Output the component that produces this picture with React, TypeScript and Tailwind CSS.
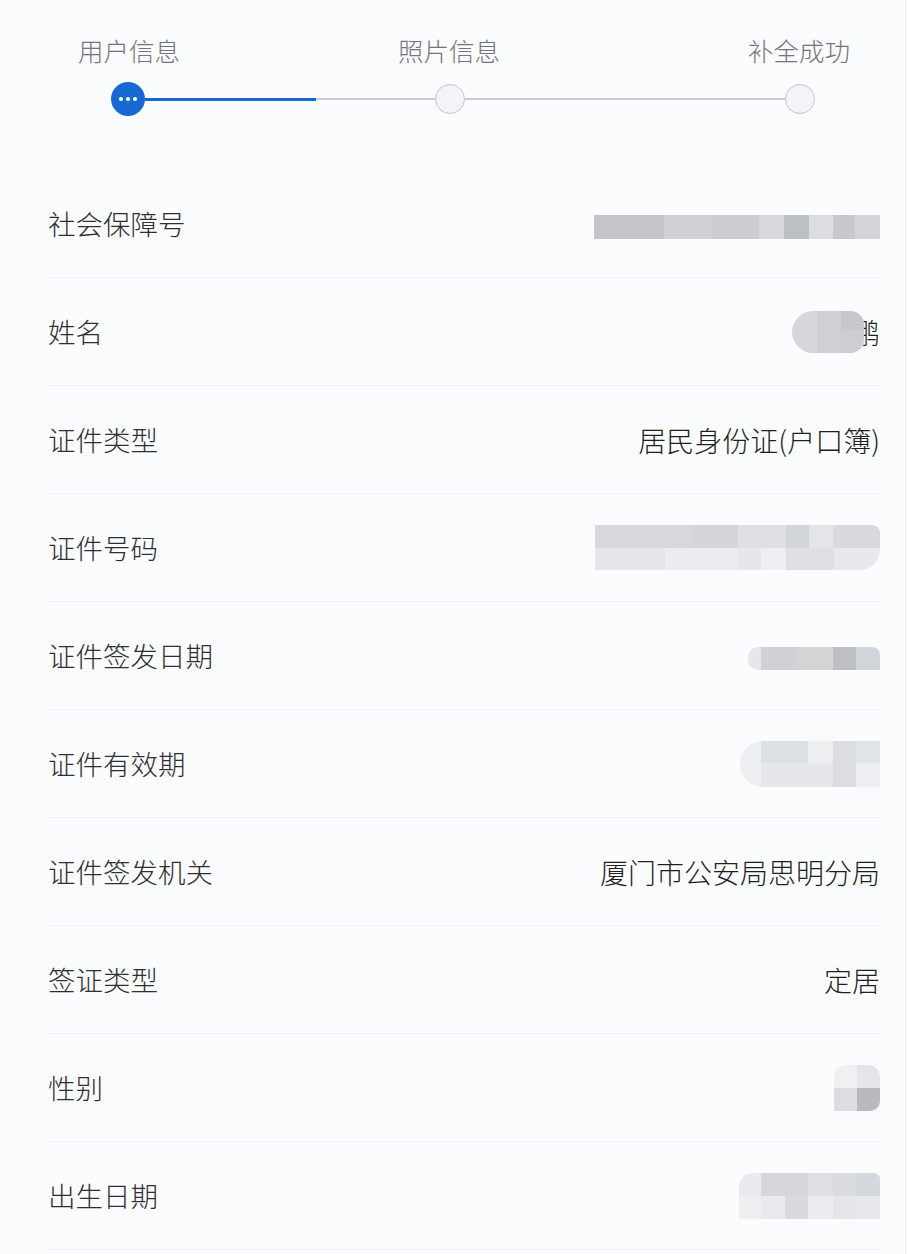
import React from "react";

// Blurred / pixelated value placeholder: rows of [width, colour] cells.
type Row = { h: number; cells: [number, string][] };

function Mosaic({ rows, className = "" }: { rows: Row[]; className?: string }) {
  return (
    <div className={`flex flex-col overflow-hidden ${className}`}>
      {rows.map((row, i) => (
        <div key={i} className="flex" style={{ height: row.h }}>
          {row.cells.map(([w, c], j) => (
            <div key={j} style={{ width: w, background: c }} />
          ))}
        </div>
      ))}
    </div>
  );
}

const SSN: Row[] = [
  {
    h: 24,
    cells: [
      [70, "#c5c6ca"],
      [48, "#d2d0d4"],
      [47, "#cbcdd1"],
      [25, "#d8d9de"],
      [25, "#bdc1c4"],
      [24, "#dcdde1"],
      [22, "#c6c8cc"],
      [25, "#d3d5db"],
    ],
  },
];

const ID_NO: Row[] = [
  {
    h: 23,
    cells: [
      [95, "#d8d9dd"],
      [48, "#d5d6da"],
      [48, "#dfe0e4"],
      [23, "#d3d6d9"],
      [24, "#e4e5e8"],
      [47, "#d7d9de"],
    ],
  },
  {
    h: 22,
    cells: [
      [70, "#e5e6e9"],
      [73, "#ebecef"],
      [23, "#e6e7ea"],
      [25, "#eeeff2"],
      [48, "#dfe0e4"],
      [46, "#e8e9ec"],
    ],
  },
];

const ISSUE_DATE: Row[] = [
  {
    h: 23,
    cells: [
      [13, "#e6e7ea"],
      [36, "#cfd1d6"],
      [36, "#d6d3d6"],
      [23, "#bebfc3"],
      [24, "#d3d5dc"],
    ],
  },
];

const VALID: Row[] = [
  {
    h: 22,
    cells: [
      [21, "#eeeff2"],
      [47, "#dde0e4"],
      [25, "#eceef0"],
      [23, "#dcdde1"],
      [24, "#e0e3e8"],
    ],
  },
  {
    h: 24,
    cells: [
      [21, "#eeeff1"],
      [47, "#e6e7ea"],
      [25, "#e6e7ea"],
      [23, "#dcdde0"],
      [24, "#eceef1"],
    ],
  },
];

const GENDER: Row[] = [
  { h: 23, cells: [[23, "#f0f0f2"], [23, "#e4e5e8"]] },
  { h: 23, cells: [[23, "#dcdde0"], [23, "#b9babe"]] },
];

const BIRTH: Row[] = [
  {
    h: 23,
    cells: [
      [22, "#eaebee"],
      [24, "#d6d7db"],
      [23, "#d5d7da"],
      [25, "#dfe0e4"],
      [23, "#dadce0"],
      [24, "#d5d8de"],
    ],
  },
  {
    h: 23,
    cells: [
      [22, "#eeeff1"],
      [24, "#e9eaed"],
      [23, "#d9dadd"],
      [25, "#ebecef"],
      [23, "#e5e6e9"],
      [24, "#e7e8ec"],
    ],
  },
];

function NameValue() {
  return (
    <span className="relative inline-flex items-center">
      <span className="text-[28px] leading-none text-[#1f1f1f]">鹏</span>
      <span className="absolute right-[16px] top-1/2 -translate-y-1/2 flex h-[42px] w-[72px] overflow-hidden rounded-l-[22px] rounded-r-[14px]">
        <span className="w-[25px] bg-[#d6d7db]" />
        <span className="w-[24px] bg-[#cfd0d4]" />
        <span className="flex w-[23px] flex-col">
          <span className="h-[20px] bg-[#c7c8cc]" />
          <span className="flex-1 bg-[#cdced2]" />
        </span>
      </span>
    </span>
  );
}

const rows: { label: string; value: React.ReactNode }[] = [
  { label: "社会保障号", value: <Mosaic rows={SSN} className="mt-[6px]" /> },
  { label: "姓名", value: <NameValue /> },
  { label: "证件类型", value: "居民身份证(户口簿)" },
  { label: "证件号码", value: <Mosaic rows={ID_NO} className="rounded-tr-[8px] rounded-br-[20px]" /> },
  { label: "证件签发日期", value: <Mosaic rows={ISSUE_DATE} className="mt-[6px] rounded-l-[10px] rounded-tr-[8px]" /> },
  { label: "证件有效期", value: <Mosaic rows={VALID} className="rounded-l-[23px]" /> },
  { label: "证件签发机关", value: "厦门市公安局思明分局" },
  { label: "签证类型", value: "定居" },
  { label: "性别", value: <Mosaic rows={GENDER} className="rounded-t-[12px] rounded-br-[10px]" /> },
  { label: "出生日期", value: <Mosaic rows={BIRTH} className="rounded-tl-[14px] rounded-tr-[6px]" /> },
];

function Stepper() {
  return (
    <div>
      <div className="flex text-[25.5px] leading-[32px] font-light text-[#75737f]">
        <div className="ml-[69px] w-[120px] text-center">用户信息</div>
        <div className="ml-[200px] w-[120px] text-center">照片信息</div>
        <div className="ml-[230px] w-[120px] text-center">补全成功</div>
      </div>
      <div className="mt-[16px] flex items-center pl-[111px]">
        <div className="flex h-[34px] w-[34px] items-center justify-center gap-[3px] rounded-full bg-[#1769d2]">
          <span className="h-[4px] w-[4px] rounded-full bg-white" />
          <span className="h-[4px] w-[4px] rounded-full bg-white" />
          <span className="h-[4px] w-[4px] rounded-full bg-white" />
        </div>
        <div className="flex w-[290px] items-center">
          <div className="h-[3px] w-[171px] bg-[#1769d2]" />
          <div className="h-[2px] flex-1 bg-[#c9ccd3]" />
        </div>
        <div className="h-[30px] w-[30px] rounded-full border-[1.5px] border-[#c4c6cc] bg-[#f3f4f7]" />
        <div className="h-[2px] w-[320px] bg-[#c9ccd3]" />
        <div className="h-[30px] w-[30px] rounded-full border-[1.5px] border-[#c4c6cc] bg-[#f3f4f7]" />
      </div>
    </div>
  );
}

export default function App() {
  return (
    <div
      className="min-h-[1254px] w-[906px] border-r border-[#eceef2] bg-[#fbfcfe] pt-[34px]"
      style={{ fontFamily: '"Noto Sans CJK SC", "Noto Sans", sans-serif' }}
    >
      <Stepper />
      <div className="mt-[54px] px-[48px] pr-[25px]">
        {rows.map((r) => (
          <div
            key={r.label}
            className="flex h-[108px] items-center justify-between border-b border-[#eff1f5]"
          >
            <span className="text-[27.5px] font-light leading-none text-[#2e2e33]">{r.label}</span>
            <span className="flex items-center text-[28px] font-light leading-none text-[#1f1f1f]">
              {r.value}
            </span>
          </div>
        ))}
      </div>
    </div>
  );
}
